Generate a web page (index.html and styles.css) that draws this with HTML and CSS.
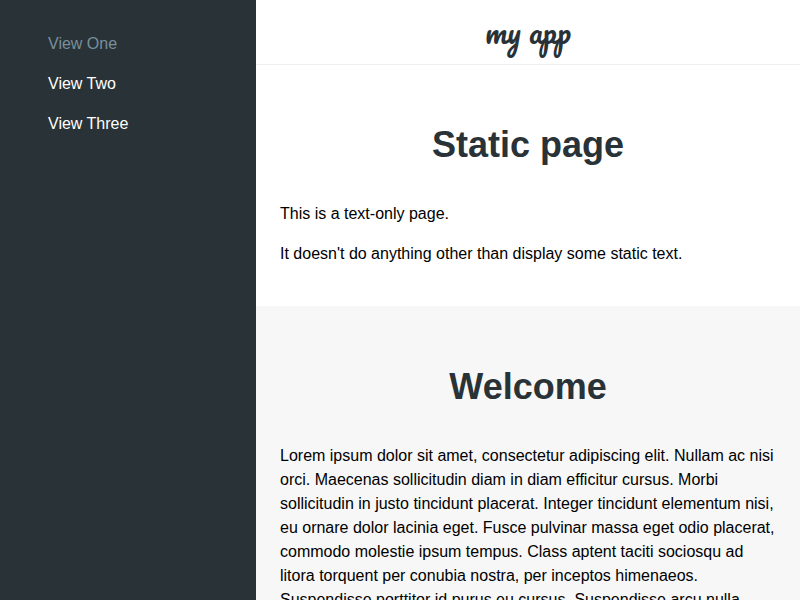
FILE: index.html
```html
<!DOCTYPE html>
<html lang="en">
<head>
<meta charset="utf-8">
<title>my app</title>
<link rel="stylesheet" href="styles.css">
</head>
<body>
<div class="app">
<nav class="drawer">
<a class="link selected">View One</a>
<a class="link">View Two</a>
<a class="link">View Three</a>
</nav>
<div class="page">
<header class="header"><span class="logo">my app</span></header>
<main>
<section class="section">
<h2>Static page</h2>
<p>This is a text-only page.</p>
<p>It doesn't do anything other than display some static text.</p>
</section>
<section class="section">
<h2>Welcome</h2>
<p>Lorem ipsum dolor sit amet, consectetur adipiscing elit. Nullam ac nisi orci. Maecenas sollicitudin diam in diam efficitur cursus. Morbi sollicitudin in justo tincidunt placerat. Integer tincidunt elementum nisi, eu ornare dolor lacinia eget. Fusce pulvinar massa eget odio placerat, commodo molestie ipsum tempus. Class aptent taciti sociosqu ad litora torquent per conubia nostra, per inceptos himenaeos. Suspendisse porttitor id purus eu cursus. Suspendisse arcu nulla</p>
</section>
</main>
</div>
</div>
</body>
</html>
```
FILE: styles.css
```css
* { box-sizing: border-box; }
body { margin: 0; font: 16px/24px "Liberation Sans", Arial, sans-serif; color: #000; }
.app { display: flex; height: 100vh; overflow: hidden; }
.drawer { flex: 0 0 256px; padding: 24px; background: #293237; }
.link { display: block; padding: 0 24px; line-height: 40px; color: #fff; }
.link.selected { color: #78909c; }
.page { flex: 1; min-width: 0; }
.header { height: 65px; margin-bottom: -1px; border-bottom: 1px solid #eee; text-align: center; }
.logo { display: block; font: 30px/64px "Pacifico", cursive; color: #293237; }
.section { padding: 24px; }
.section:nth-of-type(even) { background: #f7f7f7; }
h2 { margin: 29.88px 0; font-size: 36px; line-height: 54px; text-align: center; color: #293237; }
p { margin: 16px 0; }
```
